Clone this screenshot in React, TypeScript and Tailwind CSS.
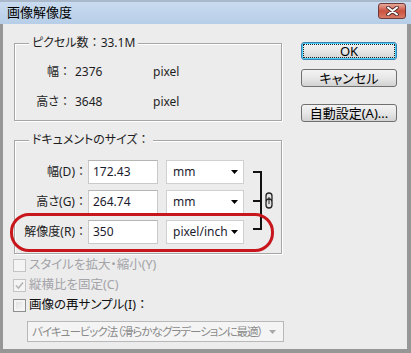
import React from 'react';

const font = "font-['Noto_Sans','Noto_Sans_CJK_JP',sans-serif] [font-feature-settings:'palt']";

// full width colon keeps its spacing (palt would squeeze it)
function Colon() {
  return <span className="[font-feature-settings:normal]">：</span>;
}

function Arrow({ color = '#000' }: { color?: string }) {
  return (
    <svg className="shrink-0" width="7" height="4" viewBox="0 0 7 4">
      <path d="M0 0h7L3.5 4z" fill={color} />
    </svg>
  );
}

function Group({ legend, className, children }: { legend: React.ReactNode; className?: string; children: React.ReactNode }) {
  return (
    <div
      className={`relative border border-[#a6a6a6] shadow-[inset_1px_1px_0_#ffffff,1px_1px_0_#ffffff] ${className ?? ''}`}
    >
      <span className="absolute -top-[10px] left-[14px] bg-[#ececec] px-[3px] leading-[18px] text-[12px]">{legend}</span>
      {children}
    </div>
  );
}

function SizeRow({ label, value, unit }: { label: string; value: string; unit: string }) {
  return (
    <div className="flex items-center h-[24px]">
      <span className="w-[73px] text-right pr-[1px]">
        {label}
        <Colon />
      </span>
      <div className="w-[70px] h-[24px] bg-white border border-[#c9c9c9] border-t-[#b5b5b5] flex items-center pl-[4px] text-[12px] text-[#1b1b2e]">
        {value}
      </div>
      <div className="ml-[8px] w-[78px] h-[24px] bg-white border border-[#d0d0d0] flex items-center justify-between pl-[6px] pr-[5px] text-[12px] text-[#1b1b2e]">
        <span>{unit}</span>
        <Arrow />
      </div>
    </div>
  );
}

function Check({ label, checked, disabled }: { label: React.ReactNode; checked?: boolean; disabled?: boolean }) {
  return (
    <div className="flex items-center h-[20px]">
      <div
        className={`w-[13px] h-[13px] border flex items-center justify-center ${
          disabled
            ? 'border-[#c4c4c4] bg-[#f4f4f4]'
            : 'border-[#8e8f8f] bg-gradient-to-br from-[#dcdcdc] to-[#fbfbfb] shadow-[inset_0_0_0_2px_#f4f4f4]'
        }`}
      >
        {checked && (
          <svg width="9" height="9" viewBox="0 0 9 9">
            <path d="M1 4.5l2.5 2.5L8 1.5" stroke="#b5b5b5" strokeWidth="1.6" fill="none" />
          </svg>
        )}
      </div>
      <span className={`ml-[3px] text-[12.5px] ${disabled ? 'text-[#a3a3a8]' : 'text-[#111]'}`}>{label}</span>
    </div>
  );
}

function Btn({ children, focused }: { children: React.ReactNode; focused?: boolean }) {
  return (
    <div
      className={`w-[96px] h-[18px] rounded-[3px] border ${
        focused ? 'border-[#3c7fb1] shadow-[inset_0_0_0_1px_#48d2f8]' : 'border-[#707070]'
      } bg-gradient-to-b from-[#f3f3f3] via-[#e7e7e7] to-[#d2d2d2] flex items-center justify-center text-[13px] text-black leading-none`}
    >
      <span
        className={`flex items-center justify-center ${
          focused ? 'w-[90px] h-[12px] outline outline-1 outline-dotted outline-[#222]' : ''
        }`}
      >
        {children}
      </span>
    </div>
  );
}

export default function App() {
  return (
    <div className={`w-[411px] h-[353px] bg-[#969696] flex flex-col text-[12px] text-[#1e1e1e] ${font}`}>
      {/* Title bar */}
      <div className="h-[24px] shrink-0 bg-gradient-to-b from-[#c9dbef] to-[#b7cee8] border-t-[2px] border-[#a9b9cb] flex items-center justify-between pl-[7px] pr-[5px]">
        <span className="text-[13px] text-black leading-none -mt-[1px]">画像解像度</span>
        <div className="w-[28px] h-[16px] -mt-[4px] rounded-[3px] border border-[#6d3a37] bg-gradient-to-b from-[#e6a99c] via-[#c9503e] to-[#d87b66] flex items-center justify-center">
          <svg width="13" height="10" viewBox="0 0 13 10">
            <path d="M2 1.5l9 7M11 1.5l-9 7" stroke="#4a2a28" strokeWidth="3.6" strokeLinecap="round" />
            <path d="M2 1.5l9 7M11 1.5l-9 7" stroke="#fff" strokeWidth="2" strokeLinecap="round" />
          </svg>
        </div>
      </div>

      {/* Body */}
      <div className="flex-1 ml-[3px] mr-[4px] mb-[4px] bg-[#ececec] flex">
        <div className="w-[279px] pl-[11px] pt-[19px] flex flex-col">
          <Group
            legend={
              <>
                ピクセル数
                <Colon />
                33.1M
              </>
            }
            className="h-[78px]"
          >
            <div className="pt-[19px] flex flex-col gap-[12px] text-[12px]">
              <div className="flex items-center h-[18px]">
                <span className="w-[56px] text-right">
                  幅<Colon />
                </span>
                <span className="ml-[4px] w-[78px]">2376</span>
                <span>pixel</span>
              </div>
              <div className="flex items-center h-[18px]">
                <span className="w-[56px] text-right">
                  高さ<Colon />
                </span>
                <span className="ml-[4px] w-[78px]">3648</span>
                <span>pixel</span>
              </div>
            </div>
          </Group>

          <Group
            legend={
              <>
                ドキュメントのサイズ
                <Colon />
              </>
            }
            className="mt-[19px] h-[114px]"
          >
            <div className="pt-[19px] flex flex-col gap-[6px] text-[12px]">
              <SizeRow label="幅(D)" value="172.43" unit="mm" />
              <SizeRow label="高さ(G)" value="264.74" unit="mm" />
              <SizeRow label="解像度(R)" value="350" unit="pixel/inch" />
            </div>
            {/* link bracket and chain */}
            <svg className="absolute left-[238px] top-[30px]" width="22" height="60" viewBox="0 0 22 60">
              <path d="M0 1h8v57H0M0 30h8" stroke="#111" strokeWidth="2" fill="none" />
              <rect x="13" y="22" width="6" height="9" rx="3" stroke="#222" strokeWidth="1.3" fill="#e4e4e4" />
              <rect x="13" y="28" width="6" height="9" rx="3" stroke="#222" strokeWidth="1.3" fill="#e4e4e4" />
              <path d="M16 26v7" stroke="#222" strokeWidth="1" />
            </svg>
            {/* red annotation */}
            <div className="absolute left-[-5px] top-[72px] w-[264px] h-[39px] rounded-[19px] border-[3px] border-[#c8161d]" />
          </Group>

          <div className="mt-[1px] -ml-[1px] flex flex-col">
            <Check label="スタイルを拡大・縮小(Y)" disabled />
            <Check label="縦横比を固定(C)" checked disabled />
            <Check
              label={
                <>
                  画像の再サンプル(I)
                  <Colon />
                </>
              }
            />
          </div>

          <div className="mt-[6px] ml-[13px] w-[257px] h-[21px] border border-[#b8b8b8] bg-[#f4f4f4] flex items-center justify-between pl-[4px] pr-[7px] overflow-hidden">
            <span className="text-[11.5px] tracking-[-1px] text-[#8a8a8a] whitespace-nowrap">
              バイキュービック法（滑らかなグラデーションに最適）
            </span>
            <Arrow color="#a8a8a8" />
          </div>
        </div>

        <div className="ml-[19px] pt-[18px] flex flex-col">
          <Btn focused>OK</Btn>
          <div className="mt-[9px]">
            <Btn>キャンセル</Btn>
          </div>
          <div className="mt-[17px]">
            <Btn>自動設定(A)...</Btn>
          </div>
        </div>
      </div>
    </div>
  );
}
